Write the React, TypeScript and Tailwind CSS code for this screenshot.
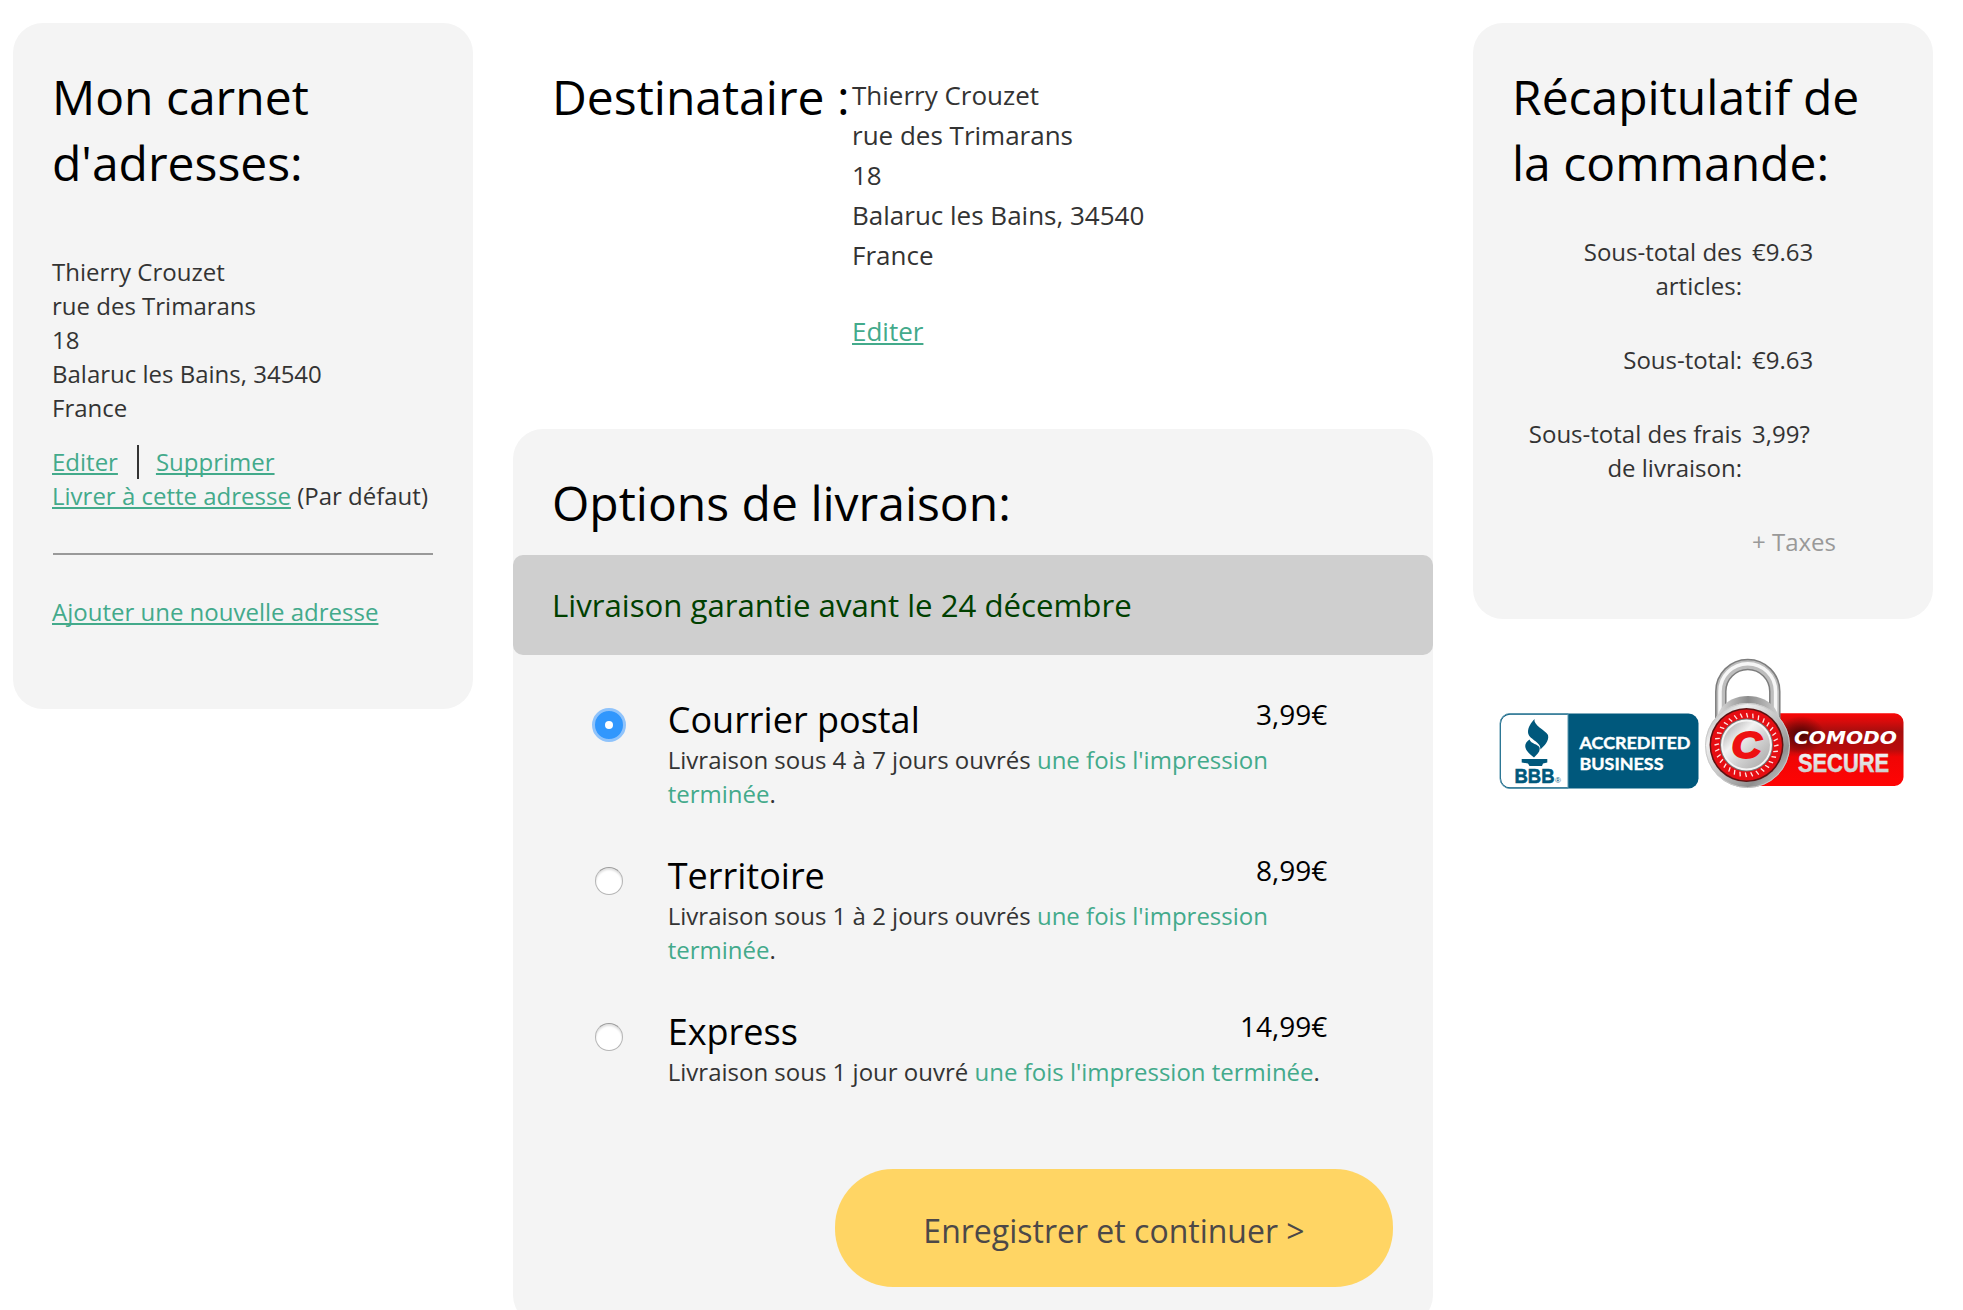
import { useState } from "react";

const ADDRESS = ["Thierry Crouzet", "rue des Trimarans", "18", "Balaruc les Bains, 34540", "France"];

const OPTIONS = [
  { title: "Courrier postal", price: "3,99€", delay: "Livraison sous 4 à 7 jours ouvrés" },
  { title: "Territoire", price: "8,99€", delay: "Livraison sous 1 à 2 jours ouvrés" },
  { title: "Express", price: "14,99€", delay: "Livraison sous 1 jour ouvré" },
];

const TOTALS = [
  { label: "Sous-total des articles:", value: "€9.63" },
  { label: "Sous-total:", value: "€9.63" },
  { label: "Sous-total des frais de livraison:", value: "3,99?" },
];

const LINK =
  "text-[#43aa8b] underline decoration-2 underline-offset-[2px] [text-decoration-skip-ink:none]";

function Heading({ children }: { children: React.ReactNode }) {
  return <h2 className="-mb-px -ml-px pt-px text-[48px] leading-[66px] text-black">{children}</h2>;
}

function AddressBook() {
  return (
    <aside className="h-[686px] w-[460px] shrink-0 rounded-[30px] bg-[#f4f4f4] p-10 text-2xl leading-[34px]">
      <Heading>Mon carnet d'adresses:</Heading>
      <address className="mt-[60px] -ml-px not-italic">
        {ADDRESS.map((line) => (
          <div key={line}>{line}</div>
        ))}
      </address>
      <div className="mt-5 -ml-px flex">
        <a className={LINK}>Editer</a>
        <span className="ml-[19px] h-[34px] border-l-2 border-[#333] pl-[17px]">
          <a className={LINK}>Supprimer</a>
        </span>
      </div>
      <div className="-ml-px whitespace-nowrap">
        <a className={LINK}>Livrer à cette adresse</a> (Par défaut)
      </div>
      <hr className="my-10 border-t-2 border-[#999]" />
      <a className={`${LINK} -ml-px`}>Ajouter une nouvelle adresse</a>
    </aside>
  );
}

function Recipient() {
  return (
    <section className="flex h-[406px] px-10 pt-10">
      <div className="w-[299px] shrink-0 whitespace-nowrap">
        <Heading>Destinataire :</Heading>
      </div>
      <div className="pt-3 text-[26px] leading-[40px]">
        {ADDRESS.map((line) => (
          <div key={line}>{line}</div>
        ))}
        <a className={`${LINK} mt-9 block`}>Editer</a>
      </div>
    </section>
  );
}

function Radio({ checked, onSelect, label }: { checked: boolean; onSelect: () => void; label: string }) {
  return (
    <button
      role="radio"
      aria-checked={checked}
      aria-label={label}
      onClick={onSelect}
      className="mt-[13px] flex size-[34px] shrink-0 items-center justify-center"
    >
      {checked ? (
        <span className="flex size-[34px] items-center justify-center rounded-full border-[3px] border-[#8fc3fb] bg-[#3197fd]">
          <span className="size-2 rounded-full bg-white" />
        </span>
      ) : (
        <span className="size-7 rounded-full border border-[#b5b5b5] border-t-[#9c9c9c] bg-white shadow-[inset_0_2px_2px_rgba(0,0,0,0.12)]" />
      )}
    </button>
  );
}

function DeliveryOptions() {
  const [selected, setSelected] = useState(0);
  return (
    <section className="h-[896px] rounded-[30px] bg-[#f4f4f4] pt-10">
      <div className="px-10">
        <Heading>Options de livraison:</Heading>
      </div>
      <div className="mt-5 flex h-[100px] items-center rounded-[10px] bg-[#cfcfcf] px-[39px] text-[31.2px] text-[#004000]">
        Livraison garantie avant le 24 décembre
      </div>
      <div className="mt-10 pl-[79px]">
        {OPTIONS.map((option, i) => (
          <div key={option.title} className="flex h-[156px] gap-[41.75px]">
            <Radio checked={selected === i} onSelect={() => setSelected(i)} label={option.title} />
            <div className="w-[659.5px]">
              <div className="flex justify-between text-black">
                <span className="-mb-px pt-px text-[36px] leading-[48px]">{option.title}</span>
                <span className="text-[28px] leading-[38px]">{option.price}</span>
              </div>
              <p className="text-2xl leading-[34px]">
                {option.delay} <a className="text-[#43aa8b]">une fois l'impression terminée</a>.
              </p>
            </div>
          </div>
        ))}
      </div>
      <div className="mt-[6px] flex justify-end pr-10">
        <button className="h-[118px] w-[558px] rounded-[58px] bg-[#ffd564] pt-1.5 text-[32px] text-[#4c4848]">
          Enregistrer et continuer &gt;
        </button>
      </div>
    </section>
  );
}

function AccreditedBadge() {
  return (
    <svg width="201" height="78" viewBox="0 0 201 78">
      <rect x="1" y="1.5" width="198.5" height="75" rx="10" fill="#00587c" />
      <path d="M69 2.7H11a9 9 0 0 0-9 9v54.6a9 9 0 0 0 9 9h58z" fill="#fff" />
      <path d="M1 11.5a10 10 0 0 1 10-10h58v75H11a10 10 0 0 1-10-10z" fill="none" stroke="#5b96ad" strokeWidth="1" />
      <g fill="#00587c">
        <path d="M35.5 7C34 13 46 18 49 23c1.500 6-4 11-7.500 14.500C42 29 29 27.500 29 20c0-5 3-9 6.500-13z" />
        <path d="M30.500 27.500C24 32 24.500 38 35 45.500c3.500-3.500 6.500-6 5.500-10C39 32 32 32 30.500 27.500z" />
        <path d="M22.700 47h25.600v3.500l-4.300 1-1 2.500H30.500l-1.500-2.500-6.300-1z" />
      </g>
      <text x="15.500" y="71" textLength="40" lengthAdjust="spacingAndGlyphs" fontSize="20" strokeWidth="0.600" className="fill-[#00587c] stroke-[#00587c] font-['Liberation_Sans'] font-bold">
        BBB
      </text>
      <text x="56" y="71.300" fontSize="8" className="fill-[#00587c] font-['Liberation_Sans']">
        ®
      </text>
      <text x="80.500" y="37" textLength="111" lengthAdjust="spacingAndGlyphs" fontSize="17.500" strokeWidth="0.400" className="fill-white stroke-white font-[Lato] font-bold">
        ACCREDITED
      </text>
      <text x="80.500" y="57.500" textLength="84" lengthAdjust="spacingAndGlyphs" fontSize="17.500" strokeWidth="0.400" className="fill-white stroke-white font-[Lato] font-bold">
        BUSINESS
      </text>
    </svg>
  );
}

function SecureBadge() {
  const ticks = Array.from({ length: 32 }, (_, i) => i * 11.25);
  return (
    <svg width="206" height="136" viewBox="0 0 206 136">
      <defs>
        <linearGradient id="plate" x1="0" y1="0" x2="0" y2="1">
          <stop offset="0" stopColor="#fb0606" />
          <stop offset="0.120" stopColor="#d40c0c" />
          <stop offset="0.250" stopColor="#a60e0e" />
          <stop offset="0.500" stopColor="#b80c0c" />
          <stop offset="0.600" stopColor="#f00505" />
          <stop offset="1" stopColor="#ff0404" />
        </linearGradient>
        <radialGradient id="shade">
          <stop offset="0" stopColor="#3a0000" stopOpacity="0.850" />
          <stop offset="1" stopColor="#3a0000" stopOpacity="0" />
        </radialGradient>
        <linearGradient id="steel" x1="0" y1="0" x2="1" y2="1">
          <stop offset="0" stopColor="#9a9a9a" />
          <stop offset="0.250" stopColor="#f0f0f0" />
          <stop offset="0.500" stopColor="#c4c4c4" />
          <stop offset="0.750" stopColor="#8f8f8f" />
          <stop offset="1" stopColor="#e6e6e6" />
        </linearGradient>
        <linearGradient id="collar" x1="0" y1="0" x2="1" y2="0">
          <stop offset="0" stopColor="#e6e6e6" />
          <stop offset="0.500" stopColor="#8c8c8c" />
          <stop offset="1" stopColor="#d6d6d6" />
        </linearGradient>
        <linearGradient id="dial" x1="0" y1="0" x2="1" y2="1">
          <stop offset="0" stopColor="#9f9f9f" />
          <stop offset="0.350" stopColor="#f2f2f2" />
          <stop offset="0.600" stopColor="#d0d0d0" />
          <stop offset="1" stopColor="#a4a4a4" />
        </linearGradient>
        <linearGradient id="silver" x1="0" y1="0" x2="0" y2="1">
          <stop offset="0" stopColor="#ffffff" />
          <stop offset="1" stopColor="#c4c4c4" />
        </linearGradient>
      </defs>
      <path d="M50 57.300h141.500a9 9 0 0 1 9 9v54.700a9 9 0 0 1-9 9H50z" fill="url(#plate)" />
      <ellipse cx="98" cy="79" rx="24" ry="19" fill="url(#shade)" />
      <g fill="none">
        <path d="M17.800 66V35.500a27 27 0 0 1 54 0v31" stroke="#7d7d7d" strokeWidth="11.500" />
        <path d="M17.800 66V35.500a27 27 0 0 1 54 0v31" stroke="#bdbdbd" strokeWidth="8.500" />
        <path d="M17 66V35.500a27.800 27.800 0 0 1 55.600 0v31" stroke="#f6f6f6" strokeWidth="3.500" />
      </g>
      <path d="M16 56C22 44 34 40 45 40s23 4 29 16l6 13H10z" fill="url(#collar)" />
      <circle cx="44.500" cy="89.500" r="42.500" fill="url(#steel)" />
      <circle cx="44.500" cy="89.500" r="42" fill="none" stroke="#c9c9c9" strokeWidth="1" />
      <circle cx="43.500" cy="89" r="37" fill="#5e1212" />
      <circle cx="43.500" cy="89" r="35.500" fill="#e60d12" />
      {ticks.map((angle) => (
        <path key={angle} d="M43.500 57l1.200 4.500" stroke="#ffe4e4" strokeWidth="1.300" transform={`rotate(${angle} 43.500 89)`} />
      ))}
      <circle cx="43.500" cy="89" r="26.500" fill="#747474" />
      <circle cx="43.500" cy="89" r="25.500" fill="#f4f4f4" />
      <circle cx="43.500" cy="89" r="23.500" fill="url(#dial)" />
      <text x="28.500" y="102" textLength="30" lengthAdjust="spacingAndGlyphs" fontSize="37" strokeWidth="2" className="fill-[#ee1111] stroke-[#ee1111] font-['Liberation_Sans'] font-bold italic">
        C
      </text>
      <text x="91" y="88.300" textLength="103" lengthAdjust="spacingAndGlyphs" fontSize="18.500" className="fill-white font-['DejaVu_Sans'] font-bold italic">
        COMODO
      </text>
      <text x="95" y="115.700" textLength="91" lengthAdjust="spacingAndGlyphs" fontSize="26.500" fill="url(#silver)" stroke="url(#silver)" strokeWidth="0.500" className="font-['Liberation_Sans'] font-bold">
        SECURE
      </text>
    </svg>
  );
}

function Summary() {
  return (
    <div className="w-[460px] shrink-0">
      <aside className="h-[596px] rounded-[30px] bg-[#f4f4f4] p-10 text-2xl leading-[34px]">
        <Heading>Récapitulatif de la commande:</Heading>
        <dl className="mt-10 grid grid-cols-[229px_1fr] gap-x-[10px] gap-y-10">
          {TOTALS.map(({ label, value }) => (
            <div key={label} className="contents">
              <dt className="text-right">{label}</dt>
              <dd>{value}</dd>
            </div>
          ))}
          <dd className="col-start-2 text-[#999]">+ Taxes</dd>
        </dl>
      </aside>
      <div className="mt-[37px] flex items-end pl-[26px]">
        <div className="mb-[2px]">
          <AccreditedBadge />
        </div>
        <div className="ml-[3px]">
          <SecureBadge />
        </div>
      </div>
    </div>
  );
}

export default function App() {
  return (
    <div className="flex h-[1310px] w-[1963px] items-start gap-10 overflow-hidden bg-white pt-[23px] pl-[13px] font-['Open_Sans',sans-serif] text-[#333]">
      <AddressBook />
      <main className="w-[920px] shrink-0">
        <Recipient />
        <DeliveryOptions />
      </main>
      <Summary />
    </div>
  );
}
